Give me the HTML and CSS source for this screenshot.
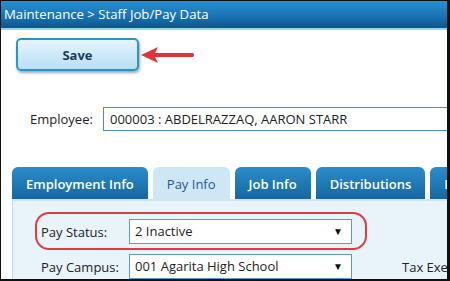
FILE: index.html
```html
<!DOCTYPE html>
<html lang="en">
<head>
  <meta charset="UTF-8">
  <title>Staff Job/Pay Data</title>
  <link rel="stylesheet" href="styles.css">
</head>
<body>
  <div class="frame">
    <div class="header">Maintenance &gt; Staff Job/Pay Data</div>
    <div class="save-row">
      <button class="save-button">Save</button>
      <svg class="arrow" width="56" height="20" viewBox="0 0 56 20">
        <path d="M2 10 L19 2 L16 8 L54 8 Q56 10 54 12 L16 12 L19 18 Z" fill="#e0343c"/>
      </svg>
    </div>
    <div class="employee-row">
      <label for="employee">Employee:</label>
      <div class="employee-box" id="employee">000003 : ABDELRAZZAQ, AARON STARR</div>
    </div>
    <div class="tabs">
      <div class="tab">Employment Info</div>
      <div class="tab active">Pay Info</div>
      <div class="tab">Job Info</div>
      <div class="tab">Distributions</div>
      <div class="tab">D</div>
    </div>
    <div class="panel">
      <div class="field-row highlight">
        <span class="field-label">Pay Status:</span>
        <div class="select">2 Inactive<span class="caret">&#9660;</span></div>
      </div>
      <div class="field-row">
        <span class="field-label">Pay Campus:</span>
        <div class="select">001 Agarita High School<span class="caret">&#9660;</span></div>
        <span class="side-label">Tax Exe</span>
      </div>
    </div>
  </div>
</body>
</html>
```

FILE: styles.css
```css
body {
  margin: 0;
  padding: 0;
  background: #fff;
  font-family: 'Open Sans', 'Segoe UI', sans-serif;
}
.frame {
  width: 450px;
  height: 281px;
  box-sizing: border-box;
  border: 1px solid #111;
  border-right-width: 3px;
  border-bottom-width: 2px;
  overflow: hidden;
  background: #fff;
}
.header {
  height: 27px;
  padding-left: 3px;
  line-height: 26px;
  font-size: 13.2px;
  color: #fff;
  background: linear-gradient(#2a8fd0, #1a74b4 55%, #0c558e);
  border-bottom: 2px solid #9fd0ee;
  white-space: nowrap;
}
.save-row {
  display: flex;
  align-items: center;
  margin-top: 8px;
  padding-left: 15px;
}
.save-button {
  width: 123px;
  height: 33px;
  border: 2px solid #2a93c8;
  border-radius: 5px;
  background: linear-gradient(#e4f4fc, #b8e0f4);
  box-shadow: 1px 2px 3px rgba(20, 60, 90, 0.45);
  font-family: 'Open Sans', sans-serif;
  font-weight: bold;
  font-size: 13px;
  color: #1e3a5e;
}
.employee-row {
  display: flex;
  align-items: center;
  margin-top: 36px;
  padding-left: 29px;
  font-size: 13px;
  color: #222;
}
.employee-row label {
  width: 73px;
}
.employee-box {
  flex: 1;
  height: 22px;
  line-height: 22px;
  padding-left: 6px;
  border: 1px solid #4a8fbd;
  border-right: none;
  color: #222;
  white-space: nowrap;
}
.tabs {
  display: flex;
  gap: 5px;
  margin-top: 36px;
  padding-left: 11px;
}
.tab {
  flex: none;
  height: 32px;
  line-height: 34px;
  padding: 0 14px;
  border-radius: 6px 6px 0 0;
  background: linear-gradient(#2b8ccb, #16679f);
  color: #fff;
  font-size: 13px;
  font-weight: 600;
  white-space: nowrap;
}
.tab.active {
  background: #cfe6f5;
  color: #1f5b8c;
  font-weight: normal;
}
.panel {
  margin-left: 11px;
  height: 100px;
  padding-top: 18px;
  background: #e9f3fa;
  border-left: 1px solid #b9dcf0;
  border-top: 2px solid #cfe6f5;
}
.field-row {
  display: flex;
  align-items: center;
  height: 25px;
  margin-left: 28px;
  font-size: 13px;
  color: #222;
  position: relative;
}
.field-row + .field-row {
  margin-top: 10px;
}
.field-label {
  width: 88px;
  flex: none;
}
.select {
  flex: none;
  width: 216px;
  height: 23px;
  line-height: 23px;
  padding-left: 5px;
  border: 1px solid #5b9cc6;
  background: #fff;
  display: flex;
  justify-content: space-between;
}
.caret {
  font-size: 10px;
  margin-right: 8px;
  color: #111;
}
.side-label {
  flex: none;
  margin-left: 50px;
  white-space: nowrap;
}
.highlight::after {
  content: '';
  position: absolute;
  left: -6px;
  top: -7px;
  width: 328px;
  height: 34px;
  border: 2px solid #dd3c43;
  border-radius: 14px;
}
```
